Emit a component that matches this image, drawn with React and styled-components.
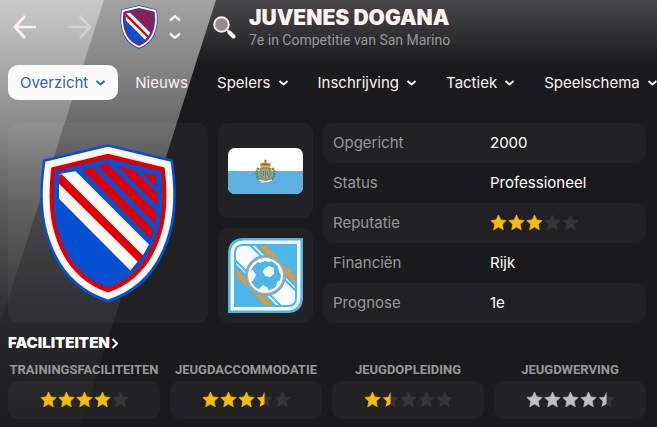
/* eslint-disable react/prop-types */
import React, { useId } from 'react';
import styled, { createGlobalStyle } from 'styled-components';

const GlobalStyle = createGlobalStyle`
  * {
    box-sizing: border-box;
  }
  body {
    margin: 0;
    background: #1a1a1c;
    color: #ffffff;
    font-family: Inter, 'Liberation Sans', sans-serif;
    font-size: 15px;
  }
`;

const Page = styled.div`
  position: relative;
  min-height: 100vh;
  padding: 0 11px 8px 8px;
  background: linear-gradient(#48484a, #1a1a1c 66px);
  overflow: hidden;
  isolation: isolate;
`;

const Backdrop = styled.svg`
  position: absolute;
  top: 0;
  left: 0;
  z-index: -1;
`;

const Header = styled.header`
  display: flex;
  align-items: center;
  height: 53px;
  padding-left: 4px;
`;

const IconButton = styled.button`
  display: flex;
  padding: 0;
  border: none;
  background: none;
  color: #fbf1f1;
  cursor: pointer;
  opacity: ${(props) => (props.disabled ? 0.4 : 1)};
`;

const History = styled.div`
  display: flex;
  gap: 30px;
  margin-right: 28px;
`;

const Switcher = styled.div`
  display: flex;
  flex-direction: column;
  gap: 8px;
  margin: 0 30px 0 10px;
`;

const Heading = styled.div`
  margin-left: 13px;
  white-space: nowrap;
`;

const ClubName = styled.h1`
  margin: 0;
  color: #fdf3f3;
  font-size: 21px;
  font-weight: 900;
  line-height: 26px;
`;

const ClubInfo = styled.p`
  margin: 0;
  color: #98989a;
  font-family: Roboto, sans-serif;
  font-size: 14px;
  line-height: 18px;
`;

const Nav = styled.nav`
  display: flex;
  gap: 5px;
  margin: 12px -11px 23px 0;
`;

const NavButton = styled.button`
  display: flex;
  flex-shrink: 0;
  align-items: center;
  gap: 7px;
  height: 35px;
  padding: 0 12px;
  border: none;
  border-radius: 10px;
  background: ${(props) => (props.$active ? '#fbfbfb' : 'none')};
  color: ${(props) => (props.$active ? '#2c64bd' : '#fbf3f3')};
  font: inherit;
  cursor: pointer;
`;

const Overview = styled.main`
  display: grid;
  grid-template-columns: 200px 95px 1fr;
  gap: 10px;
`;

const Card = styled.div`
  display: flex;
  flex: 1;
  align-items: center;
  justify-content: center;
  border-radius: 10px;
  background: rgba(255, 255, 255, 0.04);
`;

const Badges = styled.div`
  display: flex;
  flex-direction: column;
  gap: 10px;
`;

const Details = styled.table`
  width: 100%;
  border-spacing: 0;
  text-align: left;

  th,
  td {
    height: 40px;
    padding: 0 10px 2px;
  }
  th {
    width: 157px;
    border-radius: 10px 0 0 10px;
    color: #98989a;
    font-weight: 400;
  }
  td {
    border-radius: 0 10px 10px 0;
  }
  tr:nth-child(odd) > * {
    background: #212123;
  }
`;

const SectionTitle = styled.h2`
  margin: 10px 0 6px;
  font-size: 15px;
  font-weight: 900;
  line-height: 20px;

  a {
    display: inline-flex;
    align-items: center;
    gap: 1px;
    color: inherit;
    text-decoration: none;
  }
`;

const Facilities = styled.section`
  display: grid;
  grid-template-columns: repeat(4, 1fr);
  gap: 10px;
`;

const Facility = styled.div`
  display: flex;
  flex-direction: column;
  min-width: 0;
`;

const FacilityName = styled.h3`
  display: flex;
  justify-content: center;
  margin: 0;
  color: #98989a;
  font-family: Roboto, sans-serif;
  font-size: 13px;
  font-weight: 700;
  line-height: 22px;
  white-space: nowrap;
`;

const FacilityCard = styled(Card)`
  height: 38px;
  flex: none;
  padding-bottom: 2px;
`;

const StarRow = styled.div`
  display: flex;
  gap: 1px;
`;

const Chevron = ({ up, right, bold }) => {
  let d = 'M1.5 2l4 3.5L9.500 2';
  if (up) d = 'M1.5 6l4-3.5L9.5 6';
  if (right) {
    return (
      <svg width="8" height="11" viewBox="0 0 8 11" fill="none" aria-hidden="true">
        <path d="M1.5 1l4.5 4.5L1.5 10" stroke="currentColor" strokeWidth="2" />
      </svg>
    );
  }
  return (
    <svg
      width={bold ? 14 : 11}
      height={bold ? 10 : 8}
      viewBox="0 0 11 8"
      fill="none"
      aria-hidden="true"
    >
      <path d={d} stroke="currentColor" strokeWidth="1.9" strokeLinejoin="round" />
    </svg>
  );
};

const Arrow = ({ forward }) => (
  <svg width="25" height="26" viewBox="0 0 25 26" fill="none" aria-hidden="true">
    <path
      d={forward ? 'M1 13h21M13 2l10 11-10 11' : 'M24 13H3M13 2L3 13l10 11'}
      stroke="currentColor"
      strokeWidth="2.7"
    />
  </svg>
);

const SearchIcon = () => (
  <svg width="24" height="24" viewBox="0 0 24 24" fill="none" aria-hidden="true">
    <circle cx="9.5" cy="9.5" r="7.3" fill="#918d8f" stroke="currentColor" strokeWidth="2" />
    <path d="M15 15l2 2" stroke="currentColor" strokeWidth="2" />
    <path d="M17.5 17.5l4 4" stroke="currentColor" strokeWidth="4" strokeLinecap="round" />
  </svg>
);

const STAR = 'M8.5 1l2.300 4.900 5.400.6-4 3.700 1.100 5.600-4.800-2.700-4.800 2.700 1.100-5.600-4-3.700 5.400-.6z';
const HALF_STAR = 'M8.5 1v12.100l-4.800 2.700 1.100-5.600-4-3.700 5.400-.6z';

const Star = ({ fill, color }) => (
  <svg width="17" height="17" viewBox="0 0 17 17" strokeWidth=".6" aria-hidden="true">
    <path d={STAR} fill="#363638" stroke="#363638" />
    {fill === 1 && <path d={STAR} fill={color} stroke={color} />}
    {fill === 0.5 && <path d={HALF_STAR} fill={color} />}
  </svg>
);

const Stars = ({ value, color = '#f8bd0c' }) => (
  <StarRow role="img" aria-label={`${value} / 5`}>
    {[0, 1, 2, 3, 4].map((i) => (
      <Star key={i} fill={Math.max(0, Math.min(1, value - i))} color={color} />
    ))}
  </StarRow>
);

const Crest = ({ width, height }) => {
  const clip = useId();
  return (
    <svg width={width} height={height} viewBox="118 84 414 482" aria-hidden="true">
      <clipPath id={clip}>
        <path d="M325 131L470 166Q480 238 470 322C460 374 442 410 416 440Q374 498 325 514Q270 496 230 443C174 364 173 290 179 166Z" />
      </clipPath>
      <path
        d="M325 87L520 133C530 207 532 270 520 330C493 455 425 531 325 562C225 531 157 455 130 330C118 270 120 207 130 133Z"
        fill="#0750d2"
      />
      <path
        d="M325 95L513 140C523 212 524 269 512 329C486 448 421 522 325 553C229 522 164 448 138 329C126 269 127 212 137 140Z"
        fill="#faf8f1"
      />
      <path
        d="M325 116L495 157C503 225 502 280 492 329C468 434 413 502 325 532C237 502 182 434 158 329C148 280 147 225 155 157Z"
        fill="#e00004"
      />
      <path
        d="M325 131L484 168C490 225 490 278 480 326C457 426 407 488 325 517C243 488 193 426 170 326C160 278 160 225 166 168Z"
        fill="#0750d2"
      />
      <g clipPath={`url(#${clip})`}>
        <path d="M178 178L187 175L228 168L448 388L430 420L392 466L178 251Z" fill="#faf8f1" />
        <path d="M178 178H187L431 422L416 441L178 206Z" fill="#e00004" />
        <path d="M248 164L280 158L461 344L455 372Z" fill="#e00004" />
        <path d="M295 152L325 146L471 292L466 325Z" fill="#e00004" />
        <path d="M354 153L402 164L474 235V272Z" fill="#e00004" />
        <path d="M426 171L470 180V215Z" fill="#e00004" />
      </g>
    </svg>
  );
};

const Flag = () => {
  const clip = useId();
  return (
    <svg width="75" height="46" viewBox="0 0 75 46" role="img" aria-label="San Marino">
      <clipPath id={clip}>
        <rect width="75" height="46" rx="7" />
      </clipPath>
      <g clipPath={`url(#${clip})`}>
        <rect width="75" height="46" fill="#ffffff" />
        <rect y="23" width="75" height="23" fill="#5eb0df" />
      </g>
      <path
        d="M30.500 20c-3.500 5-2 10 3.500 13M44.500 20c3.500 5 2 10-3.500 13"
        fill="none"
        stroke="#63884f"
        strokeWidth="2.6"
        strokeDasharray="2 .6"
      />
      <path d="M31 32l5 1.500h3l5-1.500M33 34l9-1" fill="none" stroke="#e8e4dc" strokeWidth="1.4" />
      <path d="M31.500 20q6-3 12 0v6q-1 5-6 7-5-2-6-7z" fill="#b58a32" />
      <path d="M34 21.500q3.500-1.500 7 0v4q-.5 4-3.500 5.500-3-1.500-3.500-5.500z" fill="#76b4d5" />
      <path d="M35.500 23v5M37.500 22v8M39.500 23v5" stroke="#4d7f68" strokeWidth=".9" />
      <path
        d="M33 19l-1-3q1-2 3.500-1l2-1 2 1q2.500-1 3.500 1l-1 3q-4.500-1.500-9 0z"
        fill="#bd9130"
      />
      <path d="M37.500 11.500v4M36 13h3" stroke="#a57a25" strokeWidth="1.2" />
      <path d="M34.500 16.500h6" stroke="#8a5b27" strokeWidth=".9" />
    </svg>
  );
};

const Federation = () => {
  const clip = useId();
  const ball = useId();
  return (
    <svg width="75" height="75" viewBox="0 0 75 75" role="img" aria-label="Competitie">
      <clipPath id={clip}>
        <path d="M15 8H67V60Q67 67 60 67H8V15Q8 8 15 8Z" />
      </clipPath>
      <clipPath id={ball}>
        <circle cx="37.5" cy="37.5" r="16" />
      </clipPath>
      <path d="M14 0H75V61Q74 74 61 75H0V14Q1 1 14 0Z" fill="#4db6e8" />
      <path d="M15 2.5H72.5V60Q72 71 60 72.5H2.5V15Q3 4 15 2.5Z" fill="#f8f9fa" />
      <path d="M15 6H69V60Q69 69 60 69H6V15Q6 6 15 6Z" fill="#4db6e8" />
      <g clipPath={`url(#${clip})`}>
        <path d="M8 8H27L67 49V67H48L8 26Z" fill="#f8f9fa" />
        <path d="M21 6L69 54M6 21L54 69" stroke="#4db6e8" strokeWidth="2" />
        <path d="M31 4L71 46M4 30L46 72" stroke="#e89735" strokeWidth="5" />
      </g>
      <circle cx="37.5" cy="37.5" r="20.5" fill="#4db6e8" />
      <circle cx="37.5" cy="37.5" r="16.5" fill="#4db6e8" stroke="#f8f9fa" strokeWidth="2.4" />
      <circle cx="37.5" cy="37.5" r="18.3" fill="none" stroke="#c5a77b" strokeWidth="1.5" />
      <g clipPath={`url(#${ball})`} fill="#f8f9fa">
        <path d="M36 31l5-3 5 2v6l-4 3-5-1-2-4z" />
        <path d="M21 32h4l3 5-3 6-5 1zM29 20h14l-1 4-5-1-6 2zM31 51l4-4 5 3 1 6H30zM50 28l5 6v5l-4-5zM49 44l6-3-2 8-5 2z" />
      </g>
    </svg>
  );
};

const Stripes = () => (
  <Backdrop width="220" height="427" viewBox="0 0 220 427" aria-hidden="true">
    <defs>
      <linearGradient id="wide" x1="0" y1="0" x2="0" y2="1">
        <stop offset="0" stopColor="#a2a2a3" />
        <stop offset="0.26" stopColor="#707071" />
        <stop offset="0.46" stopColor="#454546" />
        <stop offset="0.7" stopColor="#2b2a2c" />
        <stop offset="1" stopColor="#1c1c1e" />
      </linearGradient>
      <linearGradient id="corner" x1="0" y1="0" x2="0" y2="1">
        <stop offset="0" stopColor="#ffffff" stopOpacity="0.42" />
        <stop offset="0.3" stopColor="#ffffff" stopOpacity="0.25" />
        <stop offset="1" stopColor="#ffffff" stopOpacity="0.02" />
      </linearGradient>
    </defs>
    <path d="M0 0H216L80 427H0Z" fill="url(#wide)" />
    <path d="M0 0H104L0 325Z" fill="url(#corner)" />
  </Backdrop>
);

const menu = [
  { label: 'Overzicht', active: true, drop: true },
  { label: 'Nieuws' },
  { label: 'Spelers', drop: true },
  { label: 'Inschrijving', drop: true },
  { label: 'Tactiek', drop: true },
  { label: 'Speelschema', drop: true },
];

const details = [
  ['Opgericht', '2000'],
  ['Status', 'Professioneel'],
  ['Reputatie', <Stars value={3} />],
  ['Financiën', 'Rijk'],
  ['Prognose', '1e'],
];

const facilities = [
  { name: 'TRAININGSFACILITEITEN', value: 4 },
  { name: 'JEUGDACCOMMODATIE', value: 3.5 },
  { name: 'JEUGDOPLEIDING', value: 1.5 },
  { name: 'JEUGDWERVING', value: 4.5, color: '#bdc1c3' },
];

const App = () => (
  <Page>
    <GlobalStyle />
    <Stripes />
    <Header>
      <History>
        <IconButton aria-label="Terug">
          <Arrow />
        </IconButton>
        <IconButton aria-label="Vooruit" disabled>
          <Arrow forward />
        </IconButton>
      </History>
      <Crest width="38" height="44" />
      <Switcher>
        <IconButton aria-label="Vorige club">
          <Chevron up bold />
        </IconButton>
        <IconButton aria-label="Volgende club">
          <Chevron bold />
        </IconButton>
      </Switcher>
      <IconButton aria-label="Zoeken">
        <SearchIcon />
      </IconButton>
      <Heading>
        <ClubName>JUVENES DOGANA</ClubName>
        <ClubInfo>7e in Competitie van San Marino</ClubInfo>
      </Heading>
    </Header>
    <Nav>
      {menu.map((item) => (
        <NavButton key={item.label} $active={item.active}>
          {item.label}
          {item.drop && <Chevron />}
        </NavButton>
      ))}
    </Nav>
    <Overview>
      <Card>
        <Crest width="138" height="161" />
      </Card>
      <Badges>
        <Card>
          <Flag />
        </Card>
        <Card>
          <Federation />
        </Card>
      </Badges>
      <Details>
        <tbody>
          {details.map(([label, value]) => (
            <tr key={label}>
              <th scope="row">{label}</th>
              <td>{value}</td>
            </tr>
          ))}
        </tbody>
      </Details>
    </Overview>
    <SectionTitle>
      <a href="#faciliteiten">
        FACILITEITEN
        <Chevron right />
      </a>
    </SectionTitle>
    <Facilities id="faciliteiten">
      {facilities.map(({ name, value, color }) => (
        <Facility key={name}>
          <FacilityName>{name}</FacilityName>
          <FacilityCard>
            <Stars value={value} color={color} />
          </FacilityCard>
        </Facility>
      ))}
    </Facilities>
  </Page>
);

export default App;
